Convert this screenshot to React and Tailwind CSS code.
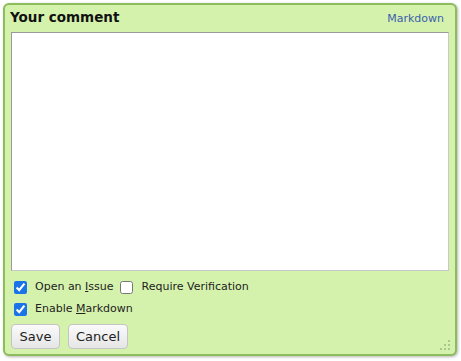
export default function App() {
  return (
    <div className="w-[461px] h-[361px] bg-white pt-[3px] pl-[3px]" style={{ fontFamily: '"DejaVu Sans", Verdana, sans-serif' }}>
      <div className="w-[454px] h-[353px] bg-[#d5f2ad] border-2 border-[#8cbc5c] rounded-[6px] shadow-[1px_1px_3px_rgba(0,0,0,0.3)] px-[6px] pt-[4px] relative flex flex-col">
        <div className="flex items-baseline justify-between h-[23px]">
          <span className="text-[13.5px] font-bold text-[#111] leading-[17px] -ml-[1px]">Your comment</span>
          <a className="text-[11px] text-[#3a5fad] pr-[5px]">Markdown</a>
        </div>
        <textarea className="w-[438px] h-[239px] bg-white border border-t-[#999] border-l-[#999] border-r-[#c8c8c8] border-b-[#c8c8c8] resize-none outline-none" />
        <div className="flex flex-col gap-[6px] mt-[8px] pl-[3px] text-[11px] text-[#222]">
          <div className="flex items-center h-[16px]">
            <input type="checkbox" defaultChecked className="w-[13px] h-[13px] m-0 accent-[#1a73e8]" />
            <span className="ml-[8px]">Open an <u>I</u>ssue</span>
            <input type="checkbox" className="w-[13px] h-[13px] m-0 ml-[6px]" />
            <span className="ml-[9px]">Require Verification</span>
          </div>
          <div className="flex items-center h-[16px]">
            <input type="checkbox" defaultChecked className="w-[13px] h-[13px] m-0 accent-[#1a73e8]" />
            <span className="ml-[8px]">Enable <u>M</u>arkdown</span>
          </div>
        </div>
        <div className="flex gap-[8px] mt-[7px]">
          <button className="w-[49px] h-[25px] text-[13px] text-[#222] rounded-[4px] border border-[#c4c4c4] bg-gradient-to-b from-[#fafafa] to-[#e6e6e6]">Save</button>
          <button className="w-[60px] h-[25px] text-[13px] text-[#222] rounded-[4px] border border-[#c4c4c4] bg-gradient-to-b from-[#fafafa] to-[#e6e6e6]">Cancel</button>
        </div>
        <svg className="absolute right-[4px] bottom-[3px]" width="12" height="12" viewBox="0 0 12 12">
          <g fill="#9ab98a">
            <circle cx="10" cy="2" r="1" />
            <circle cx="6" cy="6" r="1" />
            <circle cx="10" cy="6" r="1" />
            <circle cx="2" cy="10" r="1" />
            <circle cx="6" cy="10" r="1" />
            <circle cx="10" cy="10" r="1" />
          </g>
        </svg>
      </div>
    </div>
  );
}
